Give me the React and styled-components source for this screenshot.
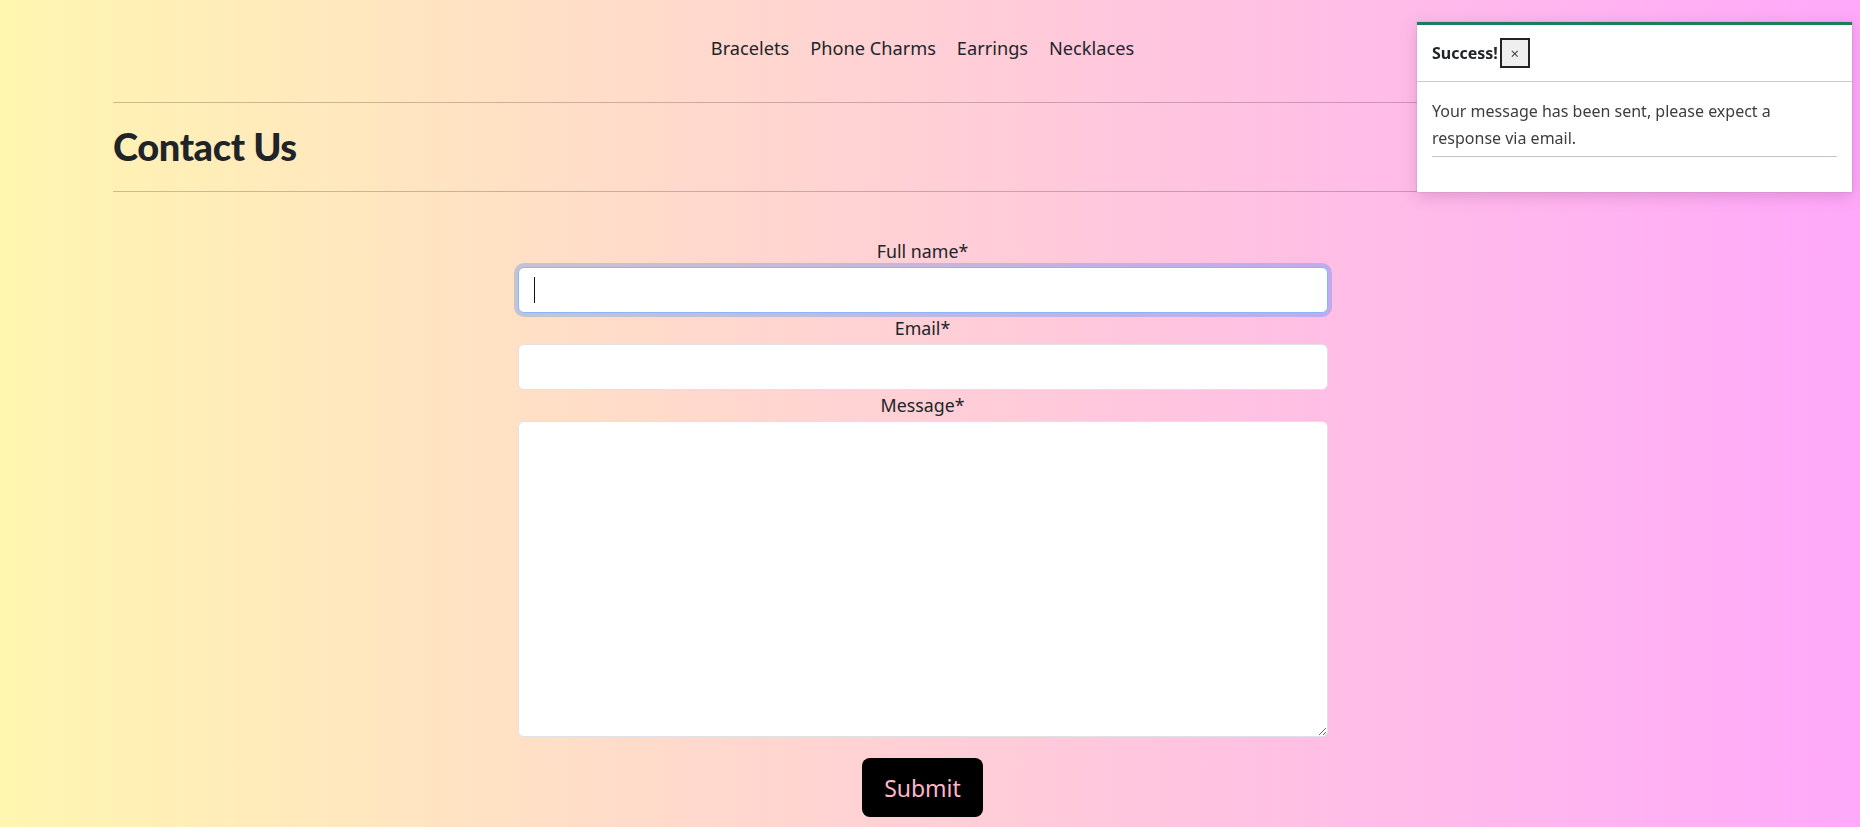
import React from "react";
import styled, { createGlobalStyle } from "styled-components";

const Global = createGlobalStyle`
  html, body { margin: 0; padding: 0; }
  body {
    min-height: 100vh;
    background: linear-gradient(to right, #fff6b0 0%, #ffcfd6 50%, #ffa8fa 100%);
    font-family: "Segoe UI", "Noto Sans", sans-serif;
    color: #212529;
  }
`;

const Main = styled.div`
  width: calc(100% - 15px);
  min-height: 827px;
  display: flex;
  flex-direction: column;
  align-items: center;
`;

const Nav = styled.nav`
  display: flex;
  justify-content: center;
  gap: 21px;
  padding-top: 33px;
`;

const NavLink = styled.a`
  font-size: 18.2px;
  line-height: 30px;
  color: #212529;
  text-decoration: none;
`;

const Header = styled.header`
  align-self: stretch;
  margin: 39px 113px 0;
  border-top: 1px solid rgba(33, 37, 41, 0.25);
  border-bottom: 1px solid rgba(33, 37, 41, 0.25);
  padding: 19px 0 21px;
`;

const Title = styled.h1`
  margin: 0;
  font-family: "Lato", "Noto Sans", sans-serif;
  font-weight: 900;
  font-size: 38px;
  line-height: 48px;
  letter-spacing: -0.4px;
  color: #1f2429;
`;

const Form = styled.form`
  width: 810px;
  margin-top: 44px;
  display: flex;
  flex-direction: column;
  align-items: stretch;
`;

const Label = styled.label`
  display: block;
  text-align: center;
  font-size: 17.8px;
  line-height: 31px;
  margin-bottom: 0;
  color: #212529;
`;

const Field = styled.div`
  position: relative;
`;

const Input = styled.input`
  box-sizing: border-box;
  display: block;
  width: 100%;
  height: 46px;
  padding: 8px 16px;
  font: inherit;
  font-size: 18px;
  background: #fff;
  border: 1px solid ${(p) => (p.$focused ? "#86b7fe" : "#dee2e6")};
  border-radius: 6px;
  outline: none;
  box-shadow: ${(p) => (p.$focused ? "0 0 0 4px rgba(13, 110, 253, 0.25)" : "none")};
`;

const Caret = styled.span`
  position: absolute;
  left: 16px;
  top: 10px;
  width: 1px;
  height: 26px;
  background: #111;
`;

const TextArea = styled.textarea`
  box-sizing: border-box;
  display: block;
  width: 100%;
  height: 316px;
  padding: 8px 16px;
  font: inherit;
  background: #fff;
  border: 1px solid #dee2e6;
  border-radius: 6px;
  outline: none;
`;

const Row = styled.div`
  margin-bottom: 0;
`;

const SubmitButton = styled.button`
  align-self: center;
  margin-top: 21px;
  width: 121px;
  height: 59px;
  border: none;
  border-radius: 8px;
  background: #000;
  color: #ffb6c8;
  font-family: "Segoe UI", "Noto Sans", sans-serif;
  font-size: 23px;
  cursor: pointer;
`;

const Toast = styled.div`
  position: fixed;
  top: 22px;
  right: 8px;
  width: 435px;
  box-sizing: border-box;
  background: #fff;
  border-top: 3px solid #1b7d58;
  box-shadow: 0 4px 14px rgba(120, 60, 110, 0.25), 0 0 1px rgba(0, 0, 0, 0.3);
`;

const ToastHeader = styled.div`
  display: flex;
  align-items: center;
  padding: 13px 15px;
  border-bottom: 1px solid #cfc8cc;
`;

const ToastTitle = styled.strong`
  font-size: 16px;
  font-weight: 700;
  color: #212529;
`;

const CloseButton = styled.button`
  box-sizing: border-box;
  width: 30px;
  height: 30px;
  padding: 0;
  margin-left: 2px;
  border: 2px solid #222;
  background: #efefef;
  color: #444;
  font-size: 15px;
  line-height: 1;
  font-family: "Noto Sans", sans-serif;
`;

const ToastBody = styled.div`
  padding: 16px 15px 15px;
`;

const ToastText = styled.p`
  margin: 0;
  font-size: 16px;
  line-height: 27px;
  color: #3d3d3d;
`;

const ToastRule = styled.hr`
  margin: 4px 0 20px;
  border: none;
  border-top: 1px solid #c8c3c7;
`;

export default function App() {
  return (
    <>
      <Global />
      <Main>
        <Nav>
          <NavLink href="#">Bracelets</NavLink>
          <NavLink href="#">Phone Charms</NavLink>
          <NavLink href="#">Earrings</NavLink>
          <NavLink href="#">Necklaces</NavLink>
        </Nav>
        <Header>
          <Title>Contact Us</Title>
        </Header>
        <Form onSubmit={(e) => e.preventDefault()}>
          <Row>
            <Label htmlFor="name">Full name*</Label>
            <Field>
              <Input id="name" type="text" $focused />
              <Caret />
            </Field>
          </Row>
          <Row>
            <Label htmlFor="email">Email*</Label>
            <Input id="email" type="email" />
          </Row>
          <Row>
            <Label htmlFor="message">Message*</Label>
            <TextArea id="message" />
          </Row>
          <SubmitButton type="submit">Submit</SubmitButton>
        </Form>
      </Main>
      <Toast role="alert">
        <ToastHeader>
          <ToastTitle>Success!</ToastTitle>
          <CloseButton type="button">×</CloseButton>
        </ToastHeader>
        <ToastBody>
          <ToastText>
            Your message has been sent, please expect a
            <br />
            response via email.
          </ToastText>
          <ToastRule />
        </ToastBody>
      </Toast>
    </>
  );
}
